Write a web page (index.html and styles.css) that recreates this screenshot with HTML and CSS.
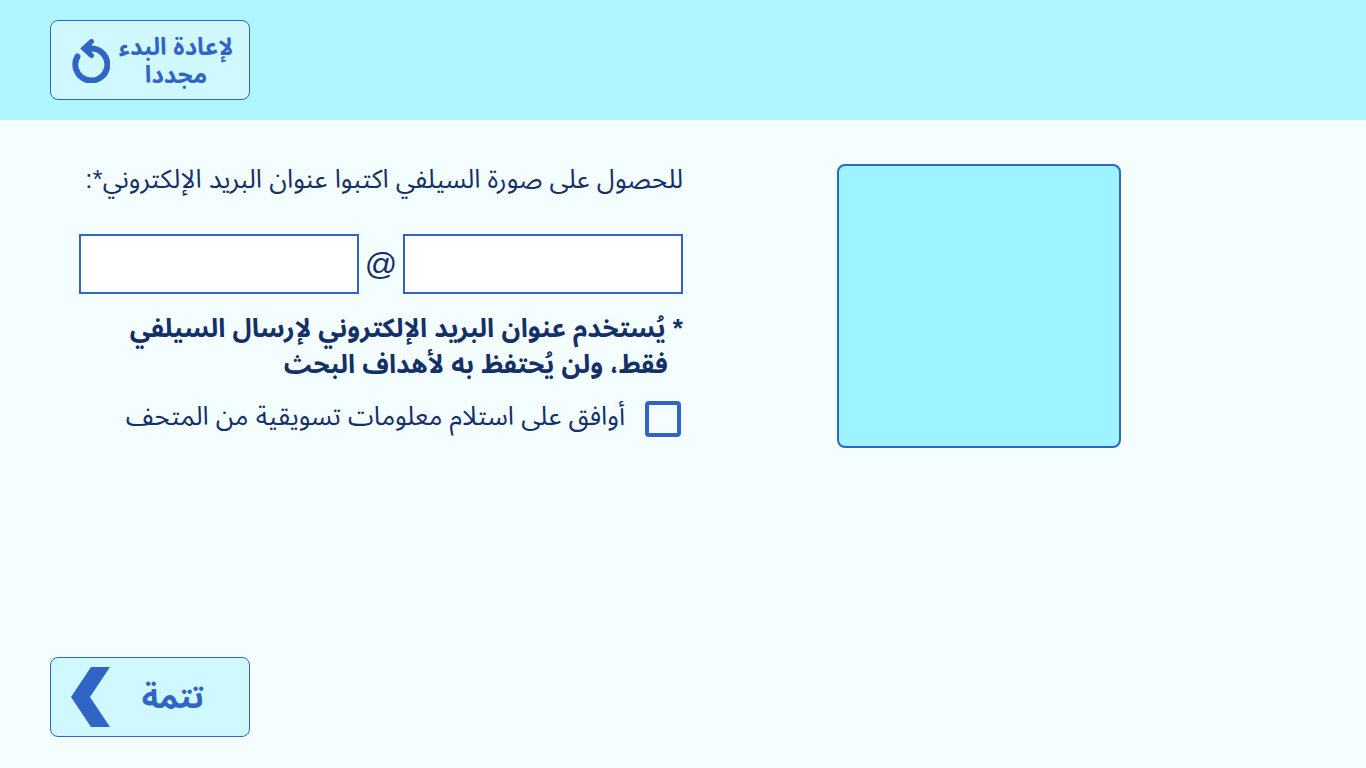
FILE: index.html
```html
<!DOCTYPE html>
<html lang="ar" dir="rtl">
<head>
<meta charset="utf-8">
<title>صورة السيلفي</title>
<link rel="stylesheet" href="styles.css">
</head>
<body>
<header class="topbar">
  <button class="btn restart" type="button">
    <span class="restart-label">لإعادة البدء مجددا</span>
    <svg class="restart-icon" viewBox="0 0 38 44" aria-hidden="true">
      <path d="M5.500 17.500A16 16 0 1 0 19 9.500H14" fill="none" stroke="currentColor" stroke-width="6" stroke-linecap="round"/>
      <path d="M19.500 2.500L12 9.500L19.500 16.500" fill="none" stroke="currentColor" stroke-width="5" stroke-linecap="round"/>
      <path d="M8.500 9.500L17.500 1L21 9.500L17.500 18Z" fill="currentColor"/>
    </svg>
  </button>
</header>
<main class="content">
  <div class="selfie"></div>
  <form class="form">
    <label class="prompt" for="user">للحصول على صورة السيلفي اكتبوا عنوان البريد الإلكتروني*:</label>
    <div class="email">
      <input class="field" id="user" type="text">
      <span class="at">@</span>
      <input class="field" id="domain" type="text" aria-label="@">
    </div>
    <p class="note">* يُستخدم عنوان البريد الإلكتروني لإرسال السيلفي<br>فقط، ولن يُحتفظ به لأهداف البحث</p>
    <div class="consent">
      <input class="check" id="agree" type="checkbox">
      <label for="agree">أوافق على استلام معلومات تسويقية من المتحف</label>
    </div>
  </form>
</main>
<footer class="bottom">
  <button class="btn next" type="button">
    <span class="next-label">تتمة</span>
    <svg class="next-icon" viewBox="0 0 39 60" aria-hidden="true"><path d="M20 0H39L19 30L39 60H20L0 30Z" fill="currentColor"/></svg>
  </button>
</footer>
</body>
</html>
```
FILE: styles.css
```css
* { box-sizing: border-box; }

body {
  margin: 0;
  min-height: 100vh;
  display: flex;
  flex-direction: column;
  background: #f5feff;
  color: #143069;
  font-family: "Liberation Sans", "Noto Sans Arabic", sans-serif;
  font-size: 26px;
  line-height: 36px;
}

.topbar {
  display: flex;
  justify-content: flex-end;
  padding: 20px 50px;
  background: #b0f6ff;
}

.btn {
  display: flex;
  align-items: center;
  width: 200px;
  height: 80px;
  border: 1px solid #3065c6;
  border-radius: 8px;
  background: #cff9ff;
  color: #3065c6;
  font-family: inherit;
  font-weight: 700;
}

.restart { justify-content: space-between; padding: 2px 15px 0 21px; }
.restart-label { width: 116px; font-size: 24px; line-height: 28px; text-align: center; }
.restart-icon { width: 38px; height: 44px; flex: none; }

.content {
  flex: 1;
  display: flex;
  align-items: flex-start;
  padding-top: 44px;
}

.selfie {
  width: 284px;
  aspect-ratio: 1;
  margin-right: 245px;
  border: 2px solid #3065c6;
  border-radius: 8px;
  background: #9df3ff;
}

.form { width: 604px; margin-right: 154px; }
.prompt { display: block; line-height: 30px; }

.email {
  display: flex;
  align-items: center;
  justify-content: space-between;
  margin-top: 40px;
}

.field {
  width: 280px;
  height: 60px;
  border: 2px solid #3065c6;
  background: #fff;
  color: inherit;
  font: inherit;
}

.at { font-size: 32px; }
.note { margin: 16px 0 0; padding-right: 15px; text-indent: -15px; font-weight: 700; }
.consent { display: flex; gap: 20px; margin-top: 19px; line-height: 30px; }

.check {
  appearance: none;
  width: 36px;
  height: 36px;
  margin: 0 2px 0 0;
  border: 4px solid #3065c6;
  border-radius: 4px;
}

.bottom { display: flex; justify-content: flex-end; padding: 0 50px 31px; }
.next { justify-content: space-between; padding: 0 45px 0 20px; }
.next-label { font-size: 32px; line-height: 48px; }
.next-icon { width: 39px; height: 60px; flex: none; }
```
